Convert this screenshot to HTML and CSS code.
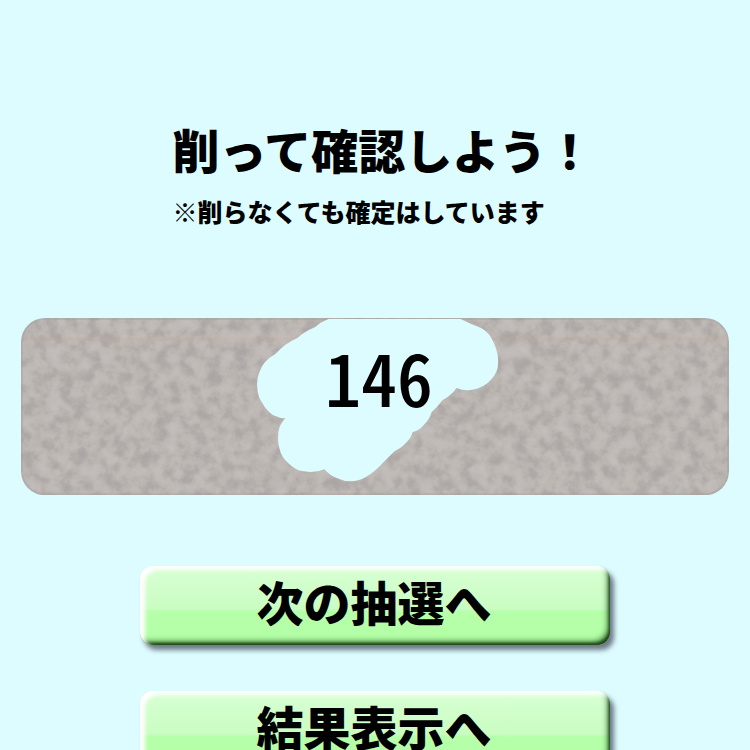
FILE: index.html
```html
<!DOCTYPE html>
<html lang="ja">
<head>
    <meta charset="UTF-8">
    <meta name="viewport" content="width=device-width, initial-scale=1.0">
    <title>削って確認しよう！</title>
    <link rel="stylesheet" href="styles.css">
</head>
<body>
    <main class="page">
        <!-- Heading -->
        <header class="heading">
            <h1 class="title">削って確認しよう！</h1>
            <p class="note">※削らなくても確定はしています</p>
        </header>

        <!-- Scratch card -->
        <section class="scratch-card">
            <div class="number">146</div>
            <svg class="coating" viewBox="0 0 707 177" aria-hidden="true">
                <defs>
                    <filter id="grain" x="0" y="0" width="100%" height="100%" color-interpolation-filters="sRGB">
                        <feTurbulence type="fractalNoise" baseFrequency="0.075" numOctaves="5" seed="21" result="noise" />
                        <feColorMatrix in="noise" type="matrix" values="1 0 0 0 0  1 0 0 0 0  1 0 0 0 0  0 0 0 0 1" />
                        <feComponentTransfer>
                            <feFuncR type="table" tableValues="0.66 0.67 0.68 0.70 0.735 0.75 0.76 0.77 0.78" />
                            <feFuncG type="table" tableValues="0.64 0.65 0.66 0.68 0.71 0.73 0.74 0.75 0.76" />
                            <feFuncB type="table" tableValues="0.63 0.64 0.65 0.67 0.695 0.715 0.73 0.74 0.75" />
                        </feComponentTransfer>
                    </filter>
                    <mask id="scratched">
                        <rect width="707" height="177" rx="24" fill="#fff" />
                        <path fill="#000" d="M307 1 Q299 4 294 9 Q282 14 276 20 Q264 25 254 36 Q242 43 239 52 Q235 60 236 71 Q237 80 241 85 Q245 93 252 97 Q258 100 264 100 Q258 106 257 114 Q256 123 258 130 Q260 139 267 145 Q274 152 282 153 Q294 155 303 151 Q308 157 316 160 Q322 163 329 163 Q337 163 344 159 Q353 154 362 144 L373 133 Q381 129 386 123 Q390 119 391 114 Q398 112 402 107 Q408 101 410 94 Q416 89 421 82 Q429 78 435 70 Q442 73 449 72 Q458 71 466 65 Q474 58 476 50 Q477 43 476 37 Q474 27 469 19 Q465 12 457 9 Q449 6 439 1 Z" />
                    </mask>
                </defs>
                <g mask="url(#scratched)">
                    <rect width="707" height="177" filter="url(#grain)" />
                    <rect y="19" width="707" height="4" fill="#c8a896" opacity="0.2" />
                    <rect x="1" y="1" width="705" height="175" rx="23" fill="none" stroke="#999" stroke-width="2" opacity="0.3" />
                </g>
            </svg>
        </section>

        <!-- Buttons -->
        <div class="actions">
            <button class="action-button" type="button">次の抽選へ</button>
            <button class="action-button" type="button">結果表示へ</button>
        </div>
    </main>
</body>
</html>
```

FILE: styles.css
```css
* {
    box-sizing: border-box;
    margin: 0;
    padding: 0;
}

body {
    background-color: #dcfcff;
    color: #000000;
    font-family: 'Noto Sans CJK JP', sans-serif;
}

.page {
    padding: 119px 21px 32px;
}

.heading {
    padding-left: 21.4%;
    white-space: nowrap;
}

.title {
    font-size: 47px;
    font-weight: 900;
    line-height: 60px;
}

.note {
    margin-top: 14px;
    font-size: 25px;
    font-weight: 900;
    line-height: 36px;
}

.scratch-card {
    display: grid;
    margin-top: 89px;
}

.coating {
    grid-area: 1 / 1;
    display: block;
    width: 100%;
    height: auto;
}

.number {
    grid-area: 1 / 1;
    justify-self: center;
    padding: 14px 0 0 8px;
    font-family: 'Noto Sans CJK JP', sans-serif;
    font-feature-settings: 'hwid';
    font-size: 72px;
    font-weight: 500;
    line-height: 88px;
}

.actions {
    display: flex;
    flex-direction: column;
    align-items: center;
    gap: 46px;
    margin-top: 71px;
}

.action-button {
    width: 100%;
    max-width: 470px;
    height: 79px;
    padding: 0 2px 10px 0;
    border: none;
    border-radius: 13px;
    background: linear-gradient(#d8ffd4, #cafdc2 54%, #b6ffaa 58%, #b2ffa5);
    box-shadow:
        inset 5px 4px 4px #ffffff,
        inset -2px -3px 3px -1px #1d4518,
        inset -4px -5px 6px -2px #33662b,
        4px 5px 5px rgba(50, 50, 70, 0.65);
    color: #000000;
    font-family: 'Noto Sans CJK JP', sans-serif;
    font-size: 47px;
    font-weight: 900;
    line-height: 60px;
    cursor: pointer;
}
```
